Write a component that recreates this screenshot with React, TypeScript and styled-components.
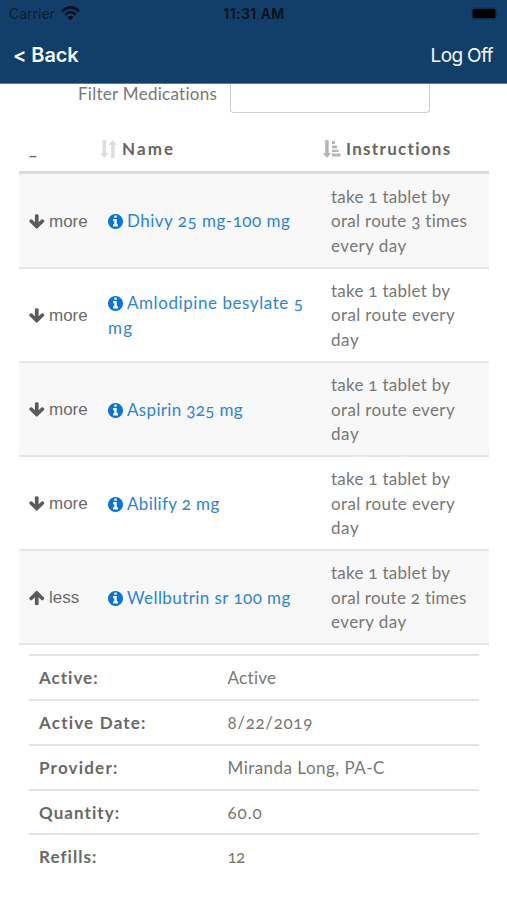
import React from "react";
import styled, { createGlobalStyle } from "styled-components";

const GlobalStyle = createGlobalStyle`
  * { box-sizing: border-box; }
  body {
    margin: 0;
    background: #fff;
    color: #777;
    font-family: Lato, "Open Sans", sans-serif;
    font-size: 17px;
    font-variant-numeric: oldstyle-nums;
    font-variant-ligatures: none;
  }
`;

const Screen = styled.div`
  width: 507px;
  height: 900px;
  overflow: hidden;
  background: #fff;
`;

const TopBar = styled.header`
  height: 84px;
  background: #113f69;
  border-bottom: 1px solid #5d7c9a;
  font-family: Inter, "Liberation Sans", sans-serif;
  font-variant-numeric: normal;
`;

const StatusBar = styled.div`
  height: 27px;
  padding: 0 8px 0 9px;
  display: grid;
  grid-template-columns: 1fr auto 1fr;
  align-items: center;
  color: #04101c;
  font-size: 14px;
`;

const Carrier = styled.div`
  display: flex;
  align-items: center;
  gap: 6px;
  color: #0a1e33;
`;

const Clock = styled.div`
  font-weight: 600;
  letter-spacing: 0.45px;
`;

const BatteryIcon = styled.svg`
  justify-self: end;
`;

const NavBar = styled.nav`
  height: 56px;
  padding: 0 14px 0 13px;
  display: flex;
  align-items: center;
  justify-content: space-between;
`;

const NavAction = styled.span<{ $strong?: boolean }>`
  color: #f4f9fc;
  font-size: ${(p) => (p.$strong ? 20 : 19)}px;
  font-weight: ${(p) => (p.$strong ? 600 : 400)};
  letter-spacing: ${(p) => (p.$strong ? -0.1 : -0.65)}px;
  white-space: pre;
`;

const Filter = styled.div`
  height: 43px;
  display: flex;
  align-items: flex-start;
  padding-left: 78px;
`;

const FilterLabel = styled.label`
  width: 152px;
  line-height: 20px;
`;

const FilterField = styled.div`
  width: 200px;
  height: 29px;
  border: 1px solid #cfcfcf;
  border-top: 0;
  border-radius: 0 0 4px 4px;
`;

const Table = styled.div`
  margin: 0 18px 0 19px;
`;

const HeadRow = styled.div`
  height: 47px;
  display: grid;
  grid-template-columns: 71px 223px 1fr;
  align-items: center;
  padding: 0 0 1px 10px;
  border-bottom: 3px solid #dcdcdc;
  color: #656565;
`;

const HeadCell = styled.div`
  display: flex;
  align-items: center;
  gap: 5px;
  font-weight: 700;
`;

const Body = styled.div`
  padding-top: 1px;
  background: linear-gradient(#f8f8f8 2px, transparent 2px);
`;

const Row = styled.div<{ $shaded?: boolean }>`
  height: 94.1px;
  display: grid;
  grid-template-columns: 79px 223px 1fr;
  align-items: center;
  padding: 1px 0 0 10px;
  border-bottom: 2px solid #e5e5e5;
  background: ${(p) => (p.$shaded ? "#f8f8f8" : "#fff")};
`;

const Toggle = styled.div`
  display: flex;
  align-items: center;
  gap: 4.5px;
  color: #6a6a6a;
  font-family: "Liberation Sans", sans-serif;
  font-size: 17px;
`;

const ToggleArrow = styled.svg<{ $up?: boolean }>`
  fill: #5b5b5b;
  transform: ${(p) => (p.$up ? "rotate(180deg)" : "none")};
`;

const DrugLink = styled.div`
  color: #2f83d4;
  line-height: 24.4px;
`;

const InfoIcon = styled.svg`
  fill: #0873d8;
  vertical-align: -2px;
  margin-right: 4px;
`;

const Instruction = styled.div`
  line-height: 24.4px;
`;

const Line = styled.span<{ $track: number }>`
  display: block;
  white-space: nowrap;
  letter-spacing: ${(p) => p.$track}px;
`;

const Text = styled.span<{ $track?: number }>`
  letter-spacing: ${(p) => p.$track ?? 0}px;
  white-space: nowrap;
`;

const Details = styled.dl`
  margin: 9px 28px 0 29px;
`;

const DetailRow = styled.div`
  height: 44.75px;
  display: grid;
  grid-template-columns: 188.5px 1fr;
  align-items: center;
  padding-left: 10px;
  border-top: 2px solid #e3e3e3;
`;

const Term = styled.dt`
  font-weight: 700;
  color: #686868;
`;

const Value = styled.dd`
  margin: 0;
`;

const Wifi = () => (
  <svg width="19" height="15" viewBox="0 0 19 15" fill="none" stroke="#04101c" strokeWidth="2.6">
    <path d="M1.2 5.2Q9.5-2.4 17.8 5.2M4.2 8.6Q9.5 3.8 14.8 8.6" />
    <path d="M6.5 11.2Q9.5 8.5 12.5 11.2L9.5 14.2Z" fill="#04101c" stroke="none" />
  </svg>
);

const Battery = () => (
  <BatteryIcon width="28" height="13" viewBox="0 0 28 13">
    <rect x=".5" y=".5" width="25" height="12" rx="3" fill="none" stroke="#0d3558" />
    <rect x="1.500" y="1.800" width="23" height="9.400" rx="2" fill="#000" />
    <path d="M26.5 4.5Q28 6.5 26.5 8.5Z" fill="#0c3152" />
  </BatteryIcon>
);

const SortBoth = () => (
  <svg width="17" height="18" viewBox="0 0 17 18" fill="#dedede">
    <path d="M2.500 0h3.500v13h2.500L4.250 18 0 13h2.500zM11 18h3.500V5H17L12.750 0 8.500 5H11z" />
  </svg>
);

const SortAscending = () => (
  <svg width="18" height="18" viewBox="0 0 18 18" fill="#b5b5b5">
    <path d="M2.200 0h3.500v13H8l-4 5-4-5h2.200zM9 1h3v3H9zM9 5.500h5v2.700H9zM9 9.700h6.500V12H9zM9 13.500h8.500V16.500H9z" />
  </svg>
);

const Arrow = ({ up }: { up?: boolean }) => (
  <ToggleArrow $up={up} width="15.500" height="15.500" viewBox="96 96 1600 1600">
    <path d="M1675 832q0 53-37 90l-651 652q-39 37-91 37-53 0-90-37l-651-652q-38-36-38-90 0-53 38-91l74-75q39-37 91-37 53 0 90 37l294 294v-704q0-52 38-90t90-38h128q52 0 90 38t38 90v704l294-294q37-37 90-37 52 0 91 37l75 75q37 39 37 91z" />
  </ToggleArrow>
);

const Info = () => (
  <InfoIcon width="15" height="15" viewBox="128 128 1536 1536">
    <path d="M1152 1376v-160q0-14-9-23t-23-9h-96v-512q0-14-9-23t-23-9h-320q-14 0-23 9t-9 23v160q0 14 9 23t23 9h96v320h-96q-14 0-23 9t-9 23v160q0 14 9 23t23 9h448q14 0 23-9t9-23zM1024 480v-160q0-14-9-23t-23-9h-192q-14 0-23 9t-9 23v160q0 14 9 23t23 9h192q14 0 23-9t9-23zM1664 896q0 209-103 385.500t-279.500 279.500-385.500 103-385.500-103-279.500-279.500-103-385.500 103-385.500 279.500-279.500 385.500-103 385.500 103 279.500 279.500 103 385.500z" />
  </InfoIcon>
);

type Entry = [string, number];
interface Medication {
  name: Entry[];
  open?: boolean;
  shaded?: boolean;
  instructions: Entry[];
}

const daily: Entry[] = [["take 1 tablet by", 0.27], ["oral route every", 0.37], ["day", 0.6]];

const medications: Medication[] = [
  { name: [["Dhivy 25 mg-100 mg", 0.5]], shaded: true, instructions: [["take 1 tablet by", 0.27], ["oral route 3 times", 0.3], ["every day", 0.43]] },
  { name: [["Amlodipine besylate 5", 0.57], ["mg", 1.2]], instructions: daily },
  { name: [["Aspirin 325 mg", 0.33]], shaded: true, instructions: daily },
  { name: [["Abilify 2 mg", 0.37]], instructions: daily },
  { name: [["Wellbutrin sr 100 mg", 0.43]], shaded: true, open: true, instructions: [["take 1 tablet by", 0.27], ["oral route 2 times", 0.27], ["every day", 0.43]] },
];

const details: [Entry, Entry][] = [
  [["Active:", 1], ["Active", 0.3]],
  [["Active Date:", 1.2], ["8/22/2019", 0.65]],
  [["Provider:", 1.2], ["Miranda Long, PA-C", 0.47]],
  [["Quantity:", 1.05], ["60.0", 0.9]],
  [["Refills:", 1.05], ["12", -0.8]],
];

export default function App() {
  return (
    <Screen>
      <GlobalStyle />
      <TopBar>
        <StatusBar>
          <Carrier>Carrier <Wifi /></Carrier>
          <Clock>11:31 AM</Clock>
          <Battery />
        </StatusBar>
        <NavBar>
          <NavAction $strong>{"< Back"}</NavAction>
          <NavAction>Log Off</NavAction>
        </NavBar>
      </TopBar>
      <Filter>
        <FilterLabel><Text $track={0.28}>Filter Medications</Text></FilterLabel>
        <FilterField />
      </Filter>
      <Table>
        <HeadRow>
          <HeadCell>_</HeadCell>
          <HeadCell><SortBoth /><Text $track={2.1}>Name</Text></HeadCell>
          <HeadCell><SortAscending /><Text $track={1.3}>Instructions</Text></HeadCell>
        </HeadRow>
        <Body>
          {medications.map((m) => (
            <Row key={m.name[0][0]} $shaded={m.shaded}>
              <Toggle>
                <Arrow up={m.open} />
                {m.open ? "less" : "more"}
              </Toggle>
              <DrugLink>
                {m.name.map(([text, track], i) => (
                  <Line key={text} $track={track}>{i === 0 && <Info />}{text}</Line>
                ))}
              </DrugLink>
              <Instruction>
                {m.instructions.map(([text, track]) => <Line key={text} $track={track}>{text}</Line>)}
              </Instruction>
            </Row>
          ))}
        </Body>
      </Table>
      <Details>
        {details.map(([term, value]) => (
          <DetailRow key={term[0]}>
            <Term><Text $track={term[1]}>{term[0]}</Text></Term>
            <Value><Text $track={value[1]}>{value[0]}</Text></Value>
          </DetailRow>
        ))}
      </Details>
    </Screen>
  );
}
